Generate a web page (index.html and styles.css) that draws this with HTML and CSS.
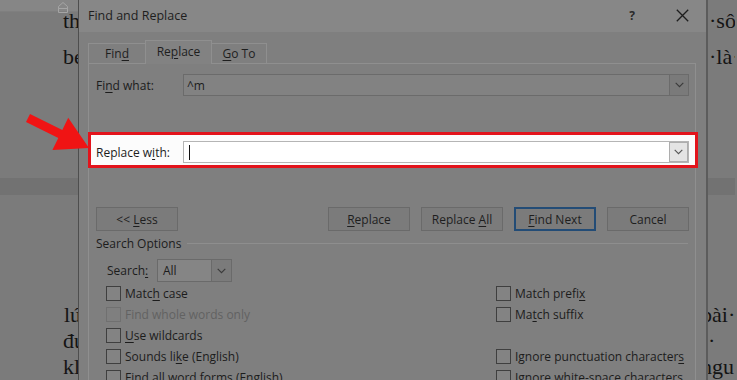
FILE: index.html
```html
<!DOCTYPE html>
<html>
<head>
<meta charset="utf-8">
<link rel="stylesheet" href="styles.css">
</head>
<body>
<div class="screen">
  <div class="doc doc-left">
    <div class="ruler">
      <svg class="indent-marker" width="12" height="12" viewBox="0 0 12 12"><path d="M1.5 5.5 L6 1.5 L10.5 5.5 V7.5 H1.5 Z M1.5 7.5 H10.5 V11.5 H1.5 Z" fill="none" stroke="#a5a5a5" stroke-width="1"/></svg>
    </div>
    <p class="dl first">th</p>
    <p class="dl second">bé</p>
    <div class="page-gap"></div>
    <p class="dl third"><span class="doc-caret"></span>lú</p>
    <p class="dl">đu</p>
    <p class="dl">kl</p>
  </div>

  <div class="dialog">
    <div class="titlebar">
      <span class="title">Find and Replace</span>
      <span class="help">?</span>
      <svg class="close" width="13" height="13" viewBox="0 0 13 13"><path d="M0.8 0.8 L12.2 12.2 M12.2 0.8 L0.8 12.2" stroke="#1e1e1e" stroke-width="1.3" fill="none"/></svg>
    </div>

    <div class="tabs">
      <div class="tab tab-find"><span>Fin<u>d</u></span></div>
      <div class="tab tab-replace selected"><span>Re<u>p</u>lace</span></div>
      <div class="tab tab-goto"><span><u>G</u>o To</span></div>
    </div>

    <div class="panel">
      <div class="field-row">
        <span class="field-label">Fi<u>n</u>d what:</span>
        <div class="combo">
          <span class="combo-text">^m</span>
          <span class="combo-btn"><svg width="9" height="6" viewBox="0 0 9 6"><path d="M0.7 0.8 L4.5 4.6 L8.3 0.8" stroke="#3a3a3a" stroke-width="1.1" fill="none"/></svg></span>
        </div>
      </div>

      <div class="field-row highlight">
        <span class="field-label">Replace w<u>i</u>th:</span>
        <div class="combo combo-white">
          <span class="text-caret"></span>
          <span class="combo-btn"><svg width="9" height="6" viewBox="0 0 9 6"><path d="M0.7 0.8 L4.5 4.6 L8.3 0.8" stroke="#555555" stroke-width="1.1" fill="none"/></svg></span>
        </div>
      </div>

      <div class="buttons">
        <div class="btn"><span>&lt;&lt; <u>L</u>ess</span></div>
        <div class="btn-group">
          <div class="btn"><span><u>R</u>eplace</span></div>
          <div class="btn"><span>Replace <u>A</u>ll</span></div>
          <div class="btn btn-default"><span><u>F</u>ind Next</span></div>
          <div class="btn"><span>Cancel</span></div>
        </div>
      </div>

      <div class="section-title"><span>Search Options</span></div>

      <div class="search-row">
        <span class="search-label">Search<u>:</u></span>
        <div class="select">
          <span class="select-text">All</span>
          <span class="select-btn"><svg width="9" height="6" viewBox="0 0 9 6"><path d="M0.7 0.8 L4.5 4.6 L8.3 0.8" stroke="#3a3a3a" stroke-width="1.1" fill="none"/></svg></span>
        </div>
      </div>

      <div class="options">
        <div class="opt"><span class="box"></span><span class="lbl">Matc<u>h</u> case</span></div>
        <div class="opt"><span class="box"></span><span class="lbl">Match prefi<u>x</u></span></div>
        <div class="opt disabled"><span class="box"></span><span class="lbl">Find whole words only</span></div>
        <div class="opt"><span class="box"></span><span class="lbl">Ma<u>t</u>ch suffix</span></div>
        <div class="opt"><span class="box"></span><span class="lbl"><u>U</u>se wildcards</span></div>
        <div class="opt empty"></div>
        <div class="opt"><span class="box"></span><span class="lbl">Sounds li<u>k</u>e (English)</span></div>
        <div class="opt"><span class="box"></span><span class="lbl">Ignore punctuation character<u>s</u></span></div>
        <div class="opt"><span class="box"></span><span class="lbl">Find all <u>w</u>ord forms (English)</span></div>
        <div class="opt"><span class="box"></span><span class="lbl">Ignore <u>w</u>hite-space characters</span></div>
      </div>
    </div>
  </div>

  <div class="doc doc-right">
    <div class="ruler ruler-right"></div>
    <p class="dr first">·sô</p>
    <p class="dr second">·là·•</p>
    <div class="page-gap"></div>
    <p class="dr third cut">bài·</p>
    <p class="dr dot">·</p>
    <p class="dr cut">ngu</p>
  </div>

  <svg class="annot-arrow" width="100" height="60" viewBox="0 0 100 60">
    <path d="M30 4 L62.3 19.9 L68.2 7.8 L89 38 L52.4 40 L58.3 27.9 L26 12 Z" fill="#f01414"/>
  </svg>
</div>
</body>
</html>
```

FILE: styles.css
```css
* { box-sizing: border-box; }

html, body {
  margin: 0;
  padding: 0;
  background: #7b7b7b;
}

.screen {
  position: relative;
  display: flex;
  width: 737px;
  height: 380px;
  overflow: hidden;
  background: #7b7b7b;
  font-family: "Open Sans", "Noto Sans", sans-serif;
  font-size: 12px;
  color: #1c1c1c;
}

u {
  text-decoration: underline;
  text-underline-offset: 2px;
  text-decoration-thickness: 1px;
}

/* ---------- annotation arrow ---------- */
.annot-arrow {
  position: absolute;
  left: 0;
  top: 110px;
  z-index: 5;
}

/* ---------- document strips ---------- */
.doc {
  background: #7b7b7b;
  overflow: hidden;
  flex: none;
}

.doc-left {
  width: 79px;
  border-right: 1px solid #4e4e4e;
}

.doc-right {
  width: 29px;
  border-left: 2px solid #5c5c5c;
}

.ruler {
  height: 12px;
  background: #868686;
  border-bottom: 1px solid #7f7f7f;
  display: flex;
  justify-content: flex-end;
  padding-right: 9px;
}

.ruler-right {
  background: #7b7b7b;
  border-bottom: none;
}

.indent-marker {
  display: block;
  margin-top: 1px;
}

.dl, .dr {
  margin: 0;
  font-family: "Liberation Serif", "DejaVu Serif", serif;
  font-size: 22px;
  line-height: 22px;
  color: #141414;
  white-space: nowrap;
  display: flex;
  align-items: center;
}

.dl { padding-left: 63px; }
.dr { padding-left: 1px; }

.dl.first, .dr.first { margin-top: -2px; }
.dl.second, .dr.second { margin-top: 14px; }

.page-gap {
  height: 17px;
  margin-top: 110px;
  background: #727272;
}

.dl.third, .dr.third { margin-top: 109px; }
.doc-left .third ~ .dl { margin-top: 4px; }
.doc-right .third ~ .dr { margin-top: 4px; }

.dr.cut { text-indent: -7px; padding-left: 0; }
.dr.dot { padding-left: 0; }

.doc-caret {
  display: inline-block;
  width: 1px;
  height: 20px;
  background: #1a1a1a;
  margin-right: 1px;
}

/* ---------- dialog ---------- */
.dialog {
  flex: none;
  width: 627px;
  background: #7f7f7f;
  display: flex;
  flex-direction: column;
}

.titlebar {
  height: 32px;
  flex: none;
  background: #878787;
  display: flex;
  align-items: center;
  padding-left: 9px;
}

.title {
  flex: 1;
  font-size: 12.5px;
  color: #1e1e1e;
  margin-top: -1px;
}

.help {
  font-size: 12px;
  font-weight: 700;
  color: #2a2a2a;
  margin-right: 41px;
  margin-top: -1px;
}

.close {
  display: block;
  margin-right: 17px;
  margin-top: -1px;
}

.tabs {
  display: flex;
  align-items: flex-end;
  height: 23px;
  margin: 8px 0 0 9px;
  flex: none;
}

.tab {
  height: 20px;
  border: 1px solid #8f8f8f;
  border-bottom: none;
  display: flex;
  align-items: center;
  justify-content: center;
  font-size: 12px;
  color: #1e1e1e;
  background: #7f7f7f;
}

.tab-find { width: 57px; border-right: none; }
.tab-replace { width: 67px; }
.tab-goto { width: 55px; border-left: none; }

.tab.selected {
  height: 24px;
  margin-bottom: -1px;
  background: #828282;
  position: relative;
  z-index: 1;
  padding-bottom: 2px;
}

.panel {
  flex: 1;
  margin: 0 10px 0 9px;
  border: 1px solid #8f8f8f;
  background: #7f7f7f;
  display: flex;
  flex-direction: column;
}

.field-row {
  display: flex;
  align-items: center;
  margin-top: 10px;
  padding: 0 6px 0 7px;
}

.field-label {
  width: 87px;
  flex: none;
}

.combo {
  flex: 1;
  height: 22px;
  border: 1px solid #6b6b6b;
  background: #828282;
  display: flex;
  align-items: center;
}

.combo-text {
  flex: 1;
  padding-left: 3px;
  font-size: 12px;
}

.combo-btn {
  width: 19px;
  height: 20px;
  flex: none;
  margin-left: auto;
  border-left: 1px solid #6b6b6b;
  background: #7a7a7a;
  display: flex;
  align-items: center;
  justify-content: center;
}

.field-row.highlight {
  margin: 36px -3px 0 -1px;
  border: 3px solid #e3141c;
  background: #fcfcfc;
  padding: 6px 6px 2px 5px;
}

.combo-white {
  background: #ffffff;
  border-color: #b5b5b5;
}

.combo-white .combo-btn {
  background: #e4e4e4;
  border: 1px solid #adadad;
  height: 20px;
}

.text-caret {
  display: block;
  width: 1px;
  height: 15px;
  background: #111111;
  margin-left: 5px;
}

.buttons {
  display: flex;
  justify-content: space-between;
  margin-top: 39px;
  padding: 0 6px 0 7px;
}

.btn-group {
  display: flex;
  gap: 11px;
}

.btn {
  width: 82px;
  height: 24px;
  border: 1px solid #6a6a6a;
  background: #7b7b7b;
  display: flex;
  align-items: center;
  justify-content: center;
  font-size: 12px;
  color: #1e1e1e;
  white-space: nowrap;
}

.btn-default {
  border: 2px solid #234c76;
}

.section-title {
  display: flex;
  align-items: center;
  gap: 6px;
  margin-top: 5px;
  padding: 0 7px;
  height: 15px;
}

.section-title::after {
  content: "";
  flex: 1;
  height: 1px;
  background: #8e8e8e;
}

.search-row {
  display: flex;
  align-items: center;
  margin-top: 8px;
  padding-left: 18px;
}

.search-label {
  width: 50px;
  flex: none;
}

.select {
  width: 75px;
  height: 23px;
  border: 1px solid #6a6a6a;
  background: #858585;
  display: flex;
  align-items: center;
}

.select-text {
  flex: 1;
  padding-left: 5px;
}

.select-btn {
  width: 20px;
  height: 21px;
  border-left: 1px solid #6a6a6a;
  background: #7b7b7b;
  display: flex;
  align-items: center;
  justify-content: center;
}

.options {
  display: grid;
  grid-template-columns: 390px 1fr;
  grid-auto-rows: 21px;
  margin-top: 1px;
  padding-left: 17px;
}

.opt {
  display: flex;
  align-items: center;
  white-space: nowrap;
  font-size: 12px;
  color: #1c1c1c;
}

.box {
  width: 15px;
  height: 15px;
  flex: none;
  border: 1px solid #3f3f3f;
  background: #838383;
  margin-right: 4px;
}

.opt.disabled {
  color: #626262;
}

.opt.disabled .box {
  border-color: #707070;
  background: #7f7f7f;
}
```
